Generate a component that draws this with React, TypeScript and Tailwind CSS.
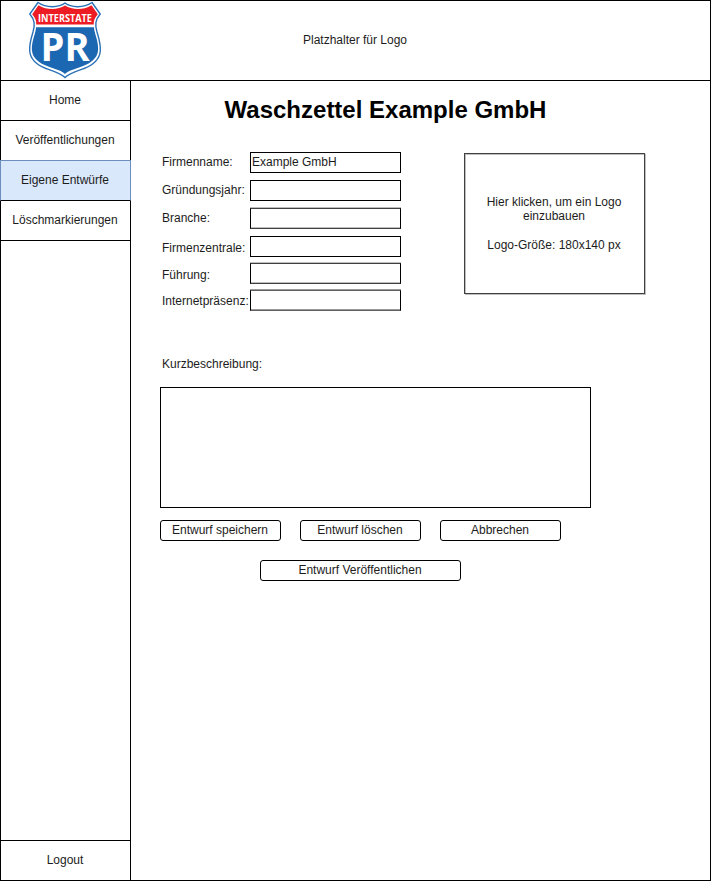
const NAV = [
  { label: "Home", active: false },
  { label: "Veröffentlichungen", active: false },
  { label: "Eigene Entwürfe", active: true },
  { label: "Löschmarkierungen", active: false },
];

const SOFT = "border-x-black border-y-[#404040] shadow-[0_-1px_0_#bfbfbf,inset_0_-1px_0_#bfbfbf]";

const FIELDS = [
  { label: "Firmenname:", value: "Example GmbH", row: "", text: "pt-[3px]", edge: "border-black" },
  { label: "Gründungsjahr:", value: "", row: "mt-[7px]", text: "pt-[3px]", edge: "border-black" },
  { label: "Branche:", value: "", row: "mt-[7px]", text: "pt-[3px]", edge: SOFT },
  { label: "Firmenzentrale:", value: "", row: "mt-[7px]", text: "pt-[5px]", edge: "border-black" },
  { label: "Führung:", value: "", row: "mt-[6px]", text: "pt-[5px]", edge: SOFT },
  {
    label: "Internetpräsenz:",
    value: "",
    row: "mt-[6px]",
    text: "pt-[4px]",
    edge: "border-x-black border-y-[#606060] shadow-[0_-1px_0_#999999,inset_0_-1px_0_#999999]",
  },
];

function Shield() {
  return (
    <svg width="72" height="78" viewBox="0 0 72 78" className="overflow-visible" aria-label="Interstate PR">
      <path
        d="M36 2 C30 6.500 18 7.500 9 1.500 L0.800 13 C6 19 6 24 4 31 C1.500 39 0.300 44 0.700 50 C1.500 59 8 64 17 67.500 C27 71 33 73 36 76.500 C39 73 45 71 55 67.500 C64 64 70.500 59 71.300 50 C71.700 44 70.500 39 68 31 C66 24 66 19 71.200 13 L63 1.500 C54 7.500 42 6.500 36 2 Z"
        fill="#fff"
        stroke="#2a70b6"
        strokeWidth="1.4"
      />
      <path
        d="M36 4.500 C29 9 18 9.500 9.500 4.200 L3.200 13.200 C6.500 17 7.500 20 7.200 23.600 L64.800 23.600 C64.500 20 65.500 17 68.800 13.200 L62.500 4.200 C54 9.500 43 9 36 4.500 Z"
        fill="#ed1c24"
      />
      <path
        d="M7 26.300 L65 26.300 C65 29 66 32 67 35.500 C69 42 69.300 46 69 50 C68.200 57 62 62 54 65 C45 68.500 39.500 69.500 36 73 C32.500 69.500 27 68.500 18 65 C10 62 3.800 57 3 50 C2.700 46 3 42 5 35.500 C6 32 7 29 7 26.300 Z"
        fill="#1c67b2"
      />
      <text x="36" y="21" textAnchor="middle" textLength="54" lengthAdjust="spacingAndGlyphs" fill="#fff" className="font-['Open_Sans',sans-serif] text-[10px] font-bold">
        INTERSTATE
      </text>
      <text x="36" y="59.500" textAnchor="middle" textLength="49" lengthAdjust="spacingAndGlyphs" fill="#fff" className="font-['Open_Sans',sans-serif] text-[39px] font-bold">
        PR
      </text>
    </svg>
  );
}

function ActionButton({ label, width }: { label: string; width: string }) {
  return (
    <button className={`h-[21px] rounded-[3px] border border-black bg-white pr-px pb-px text-center leading-[18px] ${width}`}>{label}</button>
  );
}

export default function App() {
  return (
    <div className="flex h-[881px] w-[711px] flex-col border border-black bg-white font-['Liberation_Sans',Arial,sans-serif] text-[12px] leading-[14px] text-[#1c1c1c]">
      <header className="grid h-[80px] shrink-0 grid-cols-[128px_1fr_129px] items-center border-b border-black">
        <div className="flex h-[79px] justify-center">
          <Shield />
        </div>
        <p className="pb-[2px] text-center">Platzhalter für Logo</p>
      </header>

      <div className="flex min-h-0 flex-1">
        <aside className="flex w-[130px] shrink-0 flex-col border-r border-black">
          <nav>
            {NAV.map((item) => (
              <a
                key={item.label}
                className={
                  item.active
                    ? "relative -mt-px -mr-px -ml-px flex h-[41px] items-center justify-center border border-x-[#6c8ebf] border-t-[#6c8ebf] border-b-black bg-[#dae8fc] pr-px pb-px"
                    : "flex h-[40px] items-center justify-center border-b border-black pr-px pb-px"
                }
              >
                {item.label}
              </a>
            ))}
          </nav>
          <a className="mt-auto flex h-[40px] items-center justify-center border-t border-black pr-px pb-[2px]">Logout</a>
        </aside>

        <main className="flex-1 pt-[14px] pl-[29px]">
          <h1 className="w-[451px] text-center text-[24px] leading-[29px] font-bold text-black">Waschzettel Example GmbH</h1>

          <div className="mt-[28px] flex items-start">
            <form className="w-[241px] pl-[2px]">
              {FIELDS.map((f) => (
                <label key={f.label} className={`flex h-[21px] ${f.row}`}>
                  <span className={`w-[88px] shrink-0 whitespace-nowrap ${f.text}`}>{f.label}</span>
                  <input defaultValue={f.value} className={`h-[21px] w-[151px] border bg-white px-px pb-px ${f.edge}`} />
                </label>
              ))}
            </form>
            <button className="mt-px ml-[63px] h-[141px] w-[181px] border border-[#404040] bg-white pr-[19px] pl-[18px] leading-[14.4px] shadow-[1px_1px_0_#bfbfbf,inset_1px_1px_0_#bfbfbf]">
              Hier klicken, um ein Logo einzubauen
              <br />
              <br />
              Logo-Größe: 180x140 px
            </button>
          </div>

          <label className="mt-[46px] block pl-[2px]">Kurzbeschreibung:</label>
          <textarea className="mt-[16px] block h-[121px] w-[431px] resize-none border border-black bg-white" />

          <div className="mt-[12px] flex gap-[19px]">
            <ActionButton label="Entwurf speichern" width="w-[121px]" />
            <ActionButton label="Entwurf löschen" width="w-[121px]" />
            <ActionButton label="Abbrechen" width="w-[121px]" />
          </div>
          <div className="mt-[19px] pl-[100px]">
            <ActionButton label="Entwurf Veröffentlichen" width="w-[201px]" />
          </div>
        </main>
      </div>
    </div>
  );
}
